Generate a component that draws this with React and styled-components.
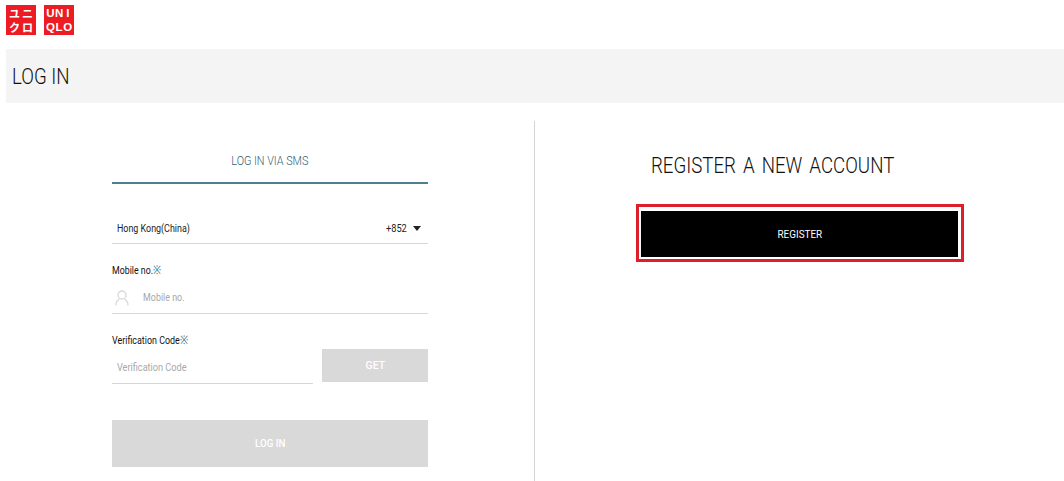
import React from "react";
import styled, { createGlobalStyle } from "styled-components";

const GlobalStyle = createGlobalStyle`
  html, body {
    margin: 0;
    padding: 0;
    background: #fff;
    overflow: hidden;
  }
  body {
    font-family: "Roboto", "Liberation Sans", sans-serif;
    font-weight: 400;
    color: #1a1a1a;
  }
`;

const Page = styled.div`
  width: 1064px;
  height: 481px;
  padding: 5px 0 0 6px;
  box-sizing: border-box;
  overflow: hidden;
`;

const Logos = styled.div`
  display: flex;
  gap: 8px;
  height: 30px;
`;

const LogoTile = styled.div`
  width: 30px;
  height: 30px;
  background: #ed1c24;
  color: #fff;
  display: grid;
  grid-template-columns: repeat(${(p) => (p.$latin ? 3 : 2)}, 1fr);
  grid-auto-rows: 14px;
  align-content: center;
  justify-items: center;
  align-items: center;
  padding: 0 2px;
  box-sizing: border-box;
  font-family: ${(p) => (p.$latin ? '"Liberation Sans"' : '"Noto Sans CJK JP"')}, sans-serif;
  font-weight: 700;
  font-size: ${(p) => (p.$latin ? "11.5px" : "11px")};
  line-height: 14px;
`;

// the reference font is a condensed one, so the text gets squeezed horizontally
const Narrow = styled.span`
  display: inline-block;
  white-space: nowrap;
  transform: scaleX(${(p) => p.$x});
  transform-origin: ${(p) => p.$origin || "left"} center;
`;

const Band = styled.div`
  margin-top: 14px;
  height: 54px;
  background: #f4f4f4;
  padding-left: 6px;
  display: flex;
  align-items: center;
`;

const Title = styled.h1`
  margin: 0;
  font-size: 22.5px;
  font-weight: 300;
  color: #111;
`;

const Columns = styled.div`
  margin-top: 18px;
  display: flex;
  height: 360px;
`;

const LeftCol = styled.div`
  width: 529px;
  box-sizing: border-box;
  padding-left: 106px;
  border-right: 1px solid #d5d5d5;
`;

const Form = styled.div`
  width: 316px;
`;

const Tab = styled.div`
  height: 63px;
  box-sizing: border-box;
  border-bottom: 2px solid #4f7f8f;
  padding-top: 32px;
  text-align: center;
  font-size: 12px;
  font-weight: 300;
  line-height: 16px;
  color: #2f6374;
`;

const Underlined = styled.div`
  display: flex;
  align-items: center;
  border-bottom: 1px solid #d6d6d6;
  height: 30px;
  box-sizing: border-box;
  font-size: 11px;
`;

const CountryRow = styled(Underlined)`
  margin-top: 30px;
  padding: 0 7px 0 5px;
  justify-content: space-between;
  color: #222;
`;

const Code = styled.span`
  display: flex;
  align-items: center;
  gap: 6px;
`;

const Caret = styled.i`
  width: 0;
  height: 0;
  border-left: 4.5px solid transparent;
  border-right: 4.5px solid transparent;
  border-top: 5px solid #222;
`;

const Label = styled.div`
  margin-top: ${(p) => p.$top}px;
  height: 14px;
  font-size: 11px;
  line-height: 14px;
  color: #111;
`;

const Mark = styled.span`
  color: #2f6f86;
  font-size: 12px;
  line-height: 0;
`;

const InputRow = styled(Underlined)`
  margin-top: 6px;
  height: 30px;
  padding-left: ${(p) => p.$pad || 3}px;
  padding-bottom: 2px;
  gap: 14px;
  color: #a8a8a8;
  font-size: 10.5px;
`;

const CodeRow = styled.div`
  display: flex;
  align-items: flex-start;
  gap: 9px;
  margin-top: 1px;
`;

const CodeInput = styled(InputRow)`
  margin-top: 5px;
  width: 201px;
  padding-left: 5px;
`;

const GreyButton = styled.button`
  display: block;
  border: 0;
  padding: 0;
  background: #d9d9d9;
  color: #fff;
  font-family: inherit;
  font-weight: 500;
  font-size: 11px;
  width: ${(p) => p.$w}px;
  height: ${(p) => p.$h}px;
  margin-top: ${(p) => p.$top || 0}px;
`;

const RightCol = styled.div`
  flex: 1;
  padding-left: 101px;
`;

const Heading = styled.h2`
  margin: 0;
  padding: 31px 0 0 15px;
  font-size: 22.5px;
  line-height: 26px;
  font-weight: 300;
  word-spacing: 3px;
  color: #111;
`;

const RegisterFrame = styled.div`
  margin-top: 26px;
  width: 328px;
  height: 58px;
  box-sizing: border-box;
  border: 3px solid #dc1f2b;
  padding: 4px 3px 2px 2px;
`;

const RegisterButton = styled.button`
  display: block;
  width: 100%;
  height: 100%;
  border: 0;
  background: #000;
  color: #fff;
  font-family: inherit;
  font-weight: 400;
  font-size: 11px;
`;

const PersonIcon = () => (
  <svg width="14" height="16" viewBox="0 0 14 16" fill="none" stroke="#d9d9d9" strokeWidth="1.3">
    <circle cx="7" cy="5" r="4" />
    <path d="M1 15.5c0-3.4 1.8-5.6 3.4-6.4M13 15.5c0-3.4-1.8-5.6-3.4-6.4" />
  </svg>
);

export default function App() {
  return (
    <Page>
      <GlobalStyle />
      <Logos>
        <LogoTile>
          <span>ユ</span><span>ニ</span><span>ク</span><span>ロ</span>
        </LogoTile>
        <LogoTile $latin>
          <span>U</span><span>N</span><span>I</span><span>Q</span><span>L</span><span>O</span>
        </LogoTile>
      </Logos>
      <Band>
        <Title><Narrow $x={0.83}>LOG IN</Narrow></Title>
      </Band>
      <Columns>
        <LeftCol>
          <Form>
            <Tab><Narrow $x={0.9} $origin="center">LOG IN VIA SMS</Narrow></Tab>
            <CountryRow>
              <Narrow $x={0.81}>Hong Kong(China)</Narrow>
              <Code>
                <Narrow $x={0.84} $origin="right">+852</Narrow>
                <Caret />
              </Code>
            </CountryRow>
            <Label $top={20}><Narrow $x={0.8}>Mobile no.<Mark>※</Mark></Narrow></Label>
            <InputRow $pad={3}>
              <PersonIcon />
              <Narrow $x={0.85}>Mobile no.</Narrow>
            </InputRow>
            <Label $top={20}><Narrow $x={0.81}>Verification Code<Mark>※</Mark></Narrow></Label>
            <CodeRow>
              <CodeInput><Narrow $x={0.87}>Verification Code</Narrow></CodeInput>
              <GreyButton $w={106} $h={33}><Narrow $x={0.95} $origin="center">GET</Narrow></GreyButton>
            </CodeRow>
            <GreyButton $w={316} $h={47} $top={36}><Narrow $x={0.88} $origin="center">LOG IN</Narrow></GreyButton>
          </Form>
        </LeftCol>
        <RightCol>
          <Heading><Narrow $x={0.83}>REGISTER A NEW ACCOUNT</Narrow></Heading>
          <RegisterFrame>
            <RegisterButton><Narrow $x={0.9} $origin="center">REGISTER</Narrow></RegisterButton>
          </RegisterFrame>
        </RightCol>
      </Columns>
    </Page>
  );
}
